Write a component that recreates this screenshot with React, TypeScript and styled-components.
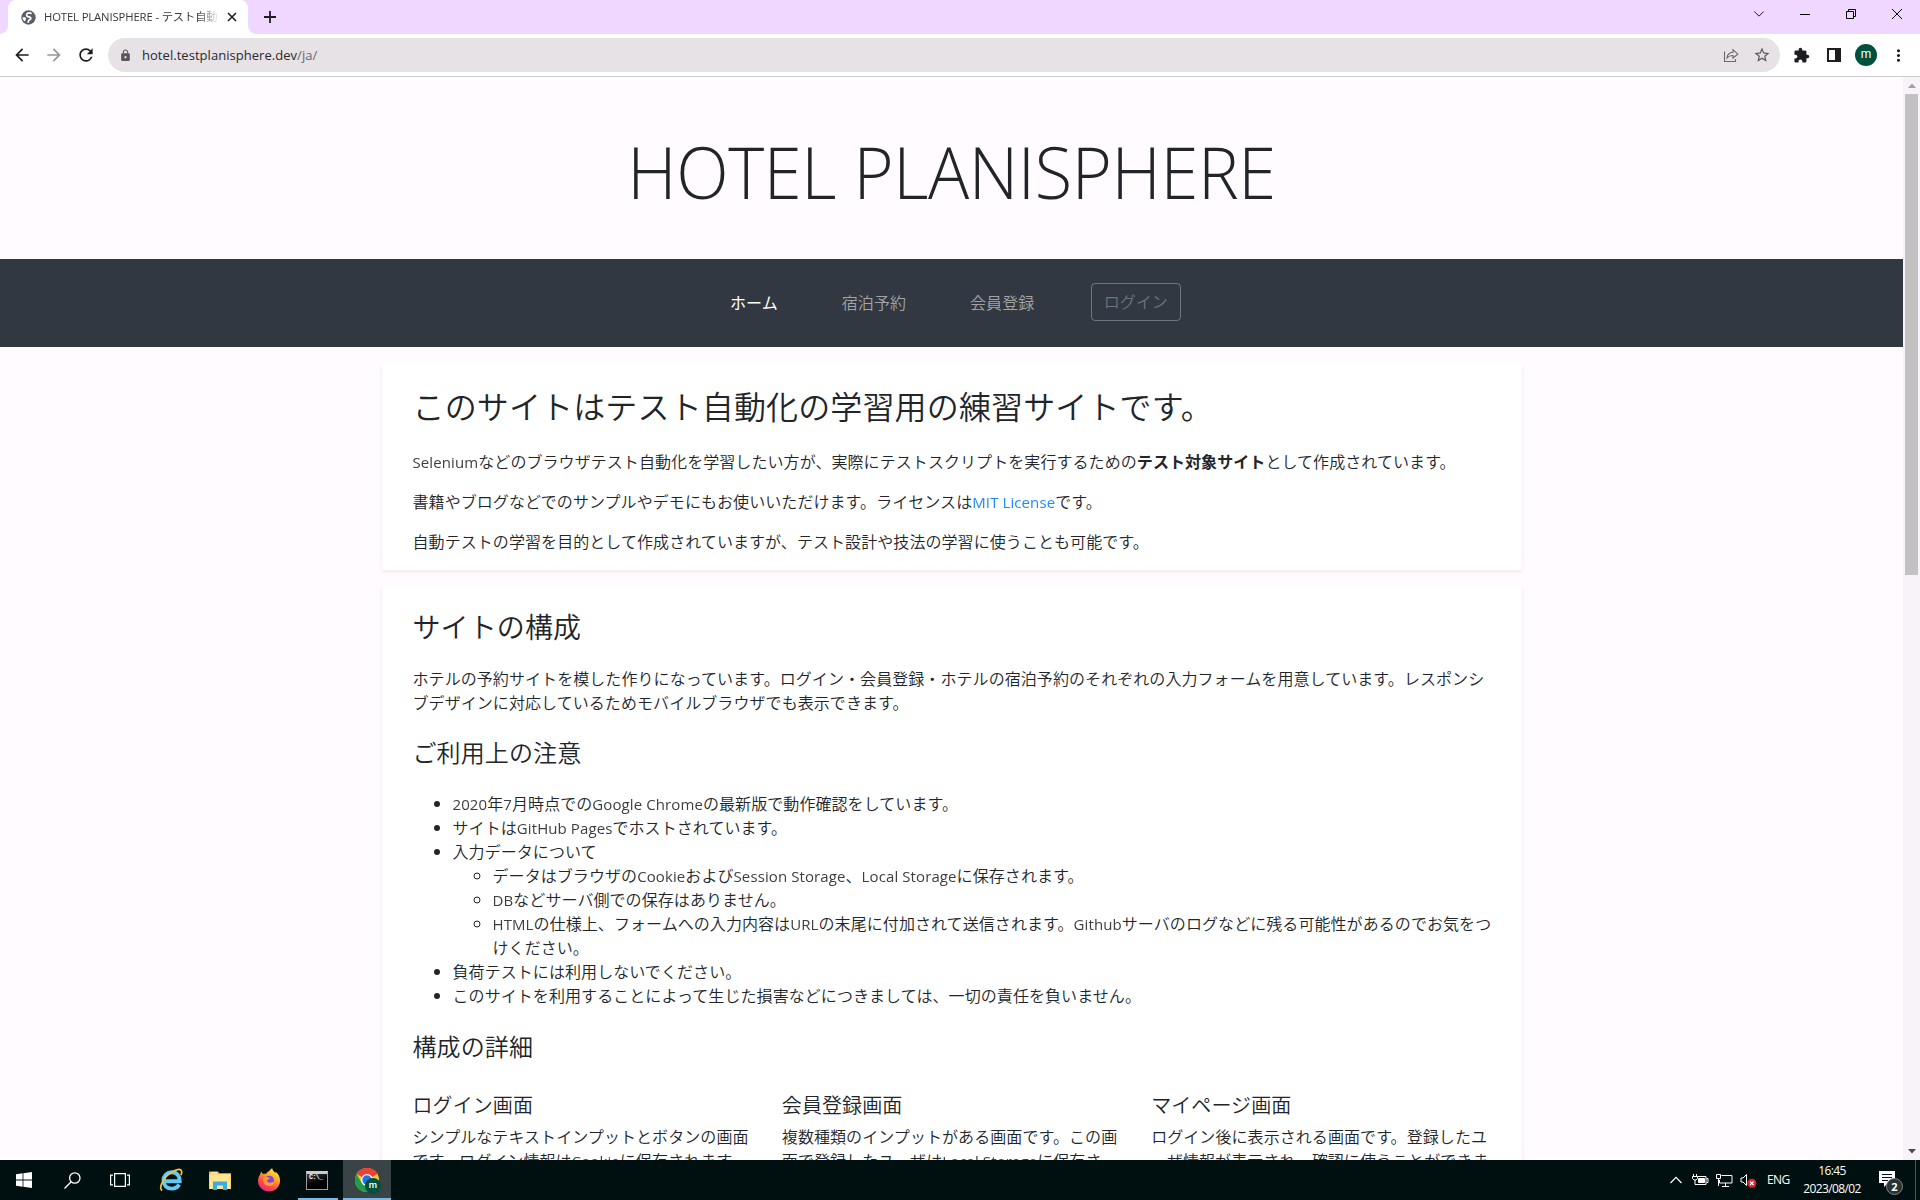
import React from "react";
import styled, { createGlobalStyle, css } from "styled-components";
import { MdArrowBack, MdArrowForward, MdRefresh, MdLock, MdStarBorder, MdExtension, MdMoreVert } from "react-icons/md";

const GlobalStyle = createGlobalStyle`
  *, *::before, *::after { box-sizing: border-box; }
  body { margin: 0; overflow: hidden; }
`;

const jpFont = `"Noto Sans CJK JP", sans-serif`;
const uiFont = `"Open Sans", "Noto Sans CJK JP", sans-serif`;

const Screen = styled.div`
  width: 1920px;
  height: 1200px;
  display: flex;
  flex-direction: column;
  overflow: hidden;
  font-family: ${uiFont};
  color: #212529;
`;

/* ---------- browser chrome ---------- */

const TabStrip = styled.div`
  height: 34px;
  flex: none;
  display: flex;
  background: #f0d7ff;
  padding-left: 8px;
`;

const Tab = styled.div`
  position: relative;
  width: 240px;
  height: 34px;
  border-radius: 8px 8px 0 0;
  background: #fff;
  display: flex;
  align-items: center;
  padding-left: 13px;
  &::before, &::after {
    content: "";
    position: absolute;
    bottom: 0;
    width: 8px;
    height: 8px;
  }
  &::before { left: -8px; background: radial-gradient(circle at 0 0, #f0d7ff 7.5px, #fff 8px); }
  &::after { right: -8px; background: radial-gradient(circle at 100% 0, #f0d7ff 7.5px, #fff 8px); }
`;

const TabTitle = styled.div`
  width: 174px;
  margin-left: 8px;
  overflow: hidden;
  white-space: nowrap;
  font-size: 11.3px;
  letter-spacing: -0.13px;
  line-height: 18px;
  color: #3a373c;
  mask-image: linear-gradient(90deg, #000 154px, transparent 176px);
`;

const TabClose = styled.div`
  display: flex;
  margin-left: 9px;
`;

const NewTab = styled.div`
  display: flex;
  align-items: center;
  margin-left: 16px;
`;

const WindowButtons = styled.div`
  display: flex;
  margin-left: auto;
  height: 28px;
`;

const WindowButton = styled.div`
  width: 46px;
  display: flex;
  align-items: center;
  justify-content: center;
`;

const Toolbar = styled.div`
  height: 43px;
  flex: none;
  display: flex;
  align-items: center;
  background: #fff;
  border-bottom: 1px solid #cfcdd0;
`;

const NavIcons = styled.div`
  display: flex;
  gap: 12px;
  padding-left: 12px;
  width: 108px;
  color: #1f1d20;
`;

const ToolIcon = styled.span<{ $color?: string }>`
  display: flex;
  color: ${(p) => p.$color ?? "#1f1d20"};
`;

const AddressBar = styled.div`
  width: 1672px;
  height: 34px;
  border-radius: 17px;
  background: #e7e2e6;
  display: flex;
  align-items: center;
  padding: 0 9px 0 11px;
  color: #5a575c;
`;

const Url = styled.div`
  flex: 1;
  margin-left: 10px;
  font-size: 13px;
  letter-spacing: 0.04px;
  color: #2b292c;
  span { color: #6b666b; }
`;

const AddressIcons = styled.div`
  display: flex;
  align-items: center;
  gap: 13px;
`;

const ToolbarRight = styled.div`
  flex: 1;
  display: flex;
  align-items: center;
  padding-left: 13px;
`;

const SidePanelIcon = styled.svg`
  width: 14px;
  height: 14px;
  margin-left: 17px;
`;

const Avatar = styled.div`
  width: 22px;
  height: 22px;
  margin: 0 12px 0 14px;
  border-radius: 50%;
  background: #00503f;
  color: #fff;
  font: 12px/20px Roboto, sans-serif;
  text-align: center;
`;

/* ---------- page ---------- */

const Viewport = styled.div`
  height: 1083px;
  flex: none;
  display: flex;
  overflow: hidden;
`;

const Page = styled.div`
  width: 1903px;
  height: 1083px;
  overflow: hidden;
  background: #fffbff;
  font: 400 16px/24px ${jpFont};
`;

const Hero = styled.header`
  height: 182.4px;
  padding: 52px 0 44px;
  text-align: center;
`;

const HeroTitle = styled.h1`
  margin: 0;
  font: 300 71px/86.4px "Open Sans", sans-serif;
  letter-spacing: -0.4px;
  transform: scaleX(0.966);
`;

const NavBar = styled.nav`
  height: 88px;
  background: #323841;
  display: flex;
  align-items: center;
  padding: 0 0 2px 730px;
  gap: 64px;
`;

const NavLink = styled.a<{ $active?: boolean }>`
  font-weight: ${(p) => (p.$active ? 400 : 350)};
  letter-spacing: 0.0044em;
  color: ${(p) => (p.$active ? "#fff" : "#a2a4a7")};
  white-space: nowrap;
`;

const LoginButton = styled.button`
  width: 90px;
  height: 38px;
  margin-left: -7px;
  padding: 0 1px 2px 0;
  border: 1px solid #6c757d;
  border-radius: 4px;
  background: transparent;
  color: #6c757d;
  font: 350 16px/24px ${jpFont};
`;

const Container = styled.main`
  width: 1140px;
  margin: 16px auto 0;
  display: flex;
  flex-direction: column;
  gap: 16px;
`;

const Card = styled.section`
  background: #fff;
  padding: 24px 31px 16px;
  box-shadow: 0 2px 4px rgba(0, 0, 0, 0.075);
  font-weight: 350;
  letter-spacing: 0.0044em;
`;

const IntroCard = styled(Card)`
  padding: 22.6px 31px 17px;
  h2 { margin-bottom: 25px; }
`;

const headings = {
  2: css`font-size: 32px; margin-bottom: 24px;`,
  3: css`font-size: 28px; margin-bottom: 22px;`,
  4: css`font-size: 24px; margin-bottom: 24px;`,
  5: css`font-size: 20px; margin-bottom: 6.5px;`,
};

const Heading = styled.h2<{ $level: 2 | 3 | 4 | 5 }>`
  margin: 0;
  line-height: 1.2;
  font-weight: 350;
  letter-spacing: 0.0044em;
  ${(p) => headings[p.$level]}
`;

const Paragraph = styled.p`
  margin: 0 0 16px;
  &:last-child { margin-bottom: 0; }
`;

const Lead = styled(Paragraph)`
  margin-bottom: 24px;
`;

const Latin = styled.span`
  font-family: "Open Sans", sans-serif;
  font-size: 15px;
  font-weight: 400;
  letter-spacing: 0.1px;
  line-height: 1;
  opacity: 0.88;
`;

const Link = styled.a`
  color: #007bff;
`;

const Strong = styled.strong`
  font-weight: 700;
`;

const List = styled.ul<{ $nested?: boolean }>`
  margin: 0 ${(p) => (p.$nested ? "-6px 0" : "0 25px")} 0;
  padding-left: 40px;
  list-style: ${(p) => (p.$nested ? "circle" : "disc")};
`;

const Columns = styled.div`
  display: grid;
  grid-template-columns: repeat(3, 1fr);
  gap: 30px;
  padding-top: 8.5px;
  height: 200px;
`;

const ScrollTrack = styled.div`
  width: 17px;
  background: #f8f3f8;
  display: flex;
  flex-direction: column;
  align-items: center;
`;

const ScrollArrow = styled.div<{ $down?: boolean }>`
  height: 17px;
  display: flex;
  align-items: center;
  margin-top: ${(p) => (p.$down ? "auto" : "0")};
`;

const ScrollThumb = styled.div`
  width: 13px;
  height: 481px;
  background: #c4c1c5;
`;

/* ---------- taskbar ---------- */

const Taskbar = styled.footer`
  height: 40px;
  flex: none;
  display: flex;
  background: #000f10;
  color: #fff;
`;

const TaskItem = styled.div<{ $w?: number; $active?: boolean; $running?: boolean }>`
  width: ${(p) => p.$w ?? 48}px;
  height: 40px;
  display: flex;
  align-items: center;
  justify-content: center;
  background: ${(p) => (p.$active ? "#3a4446" : "transparent")};
  box-shadow: ${(p) => (p.$active ? "inset 0 -2px #76b9ed" : "none")};
  ${(p) =>
    p.$running &&
    css`
      padding-right: 3px;
      background: linear-gradient(#76b9ed, #76b9ed) 4px 100% / 40px 2px no-repeat;
    `}
`;

const Tray = styled.div`
  margin-left: auto;
  display: flex;
  align-items: center;
  height: 40px;
`;

const Language = styled.div`
  width: 24px;
  margin-left: 10px;
  padding-bottom: 1px;
  font-size: 12px;
  letter-spacing: -0.6px;
`;

const Clock = styled.div`
  width: 60px;
  margin-left: 11px;
  padding-bottom: 1px;
  text-align: center;
  font-size: 12px;
  letter-spacing: -0.6px;
  line-height: 18px;
  white-space: nowrap;
`;

const Notice = styled.div`
  position: relative;
  display: flex;
  margin-left: 17px;
  width: 36px;
  height: 18px;
`;

const NoticeCount = styled.div`
  position: absolute;
  left: 7px;
  top: 7px;
  width: 17px;
  height: 17px;
  border-radius: 50%;
  border: 1px solid #7c8585;
  background: #2c3133;
  font: 700 11px/15px "Open Sans", sans-serif;
  text-align: center;
`;

const ShowDesktop = styled.div`
  width: 5px;
  height: 40px;
  border-left: 1px solid #4d5758;
`;

/** Sets runs of Latin letters and digits in the Latin face, the rest in the page face. */
const T = ({ children }: { children: string }) => (
  <>
    {children.split(/([A-Za-z0-9][A-Za-z0-9 ]*)/).map((part, i) =>
      i % 2 ? <Latin key={i}>{part}</Latin> : part
    )}
  </>
);

const screens = [
  { title: "ログイン画面", body: "シンプルなテキストインプットとボタンの画面です。ログイン情報はCookieに保存されます。" },
  { title: "会員登録画面", body: "複数種類のインプットがある画面です。この画面で登録したユーザはLocal Storageに保存され、ログインに使うことができます。" },
  { title: "マイページ画面", body: "ログイン後に表示される画面です。登録したユーザ情報が表示され、確認に使うことができます。" },
];

const GlobeIcon = () => (
  <svg width="15" height="15" viewBox="0 0 15 15">
    <circle cx="7.5" cy="7.5" r="7.2" fill="#5a5e66" />
    <path d="M10.500 3.800C9.300 2.500 6.500 2.700 5.800 4.200c-.7 1.600.6 2.500 2 2.700 1.600.2 2.400.9 1.900 2-.5 1-2.300.9-2.400 2.300l-.1 1.500" stroke="#fff" strokeWidth="1.700" fill="none" />
    <path d="M1.600 7c1.300.3 3 .1 3.400 1.200.2.900-.5 1.200-.6 2.200l-.2 1.200C2.300 10.600 1.500 8.900 1.600 7z" fill="#fff" />
  </svg>
);

const ShareIcon = () => (
  <svg width="17" height="15" viewBox="0 0 17 15" fill="none" stroke="#6c686d" strokeWidth="1.1">
    <path d="M1.500 3.500v10h11v-2.500M4 10C4.300 6.500 6.500 4.500 10 4.300V1.700l4.800 4.400L10 10V7.500C7.500 7.400 5.500 8 4 10z" />
  </svg>
);

const IeIcon = () => (
  <svg width="24" height="24" viewBox="0 0 24 24" fill="none">
    <path d="M20.200 16.500C18.800 19 16.100 20.600 12.700 20.600c-5 0-8.200-3.500-8.200-8.100C4.500 7.700 8 4.300 12.800 4.300c5 0 8.100 3.700 7.900 9H6" stroke="#63caf5" strokeWidth="3.900" />
    <path d="M3.200 22.500C-1 19.500 5 8.500 13 4 18.500.5 22.800.3 22.700 4.200c0 1-.3 2-.8 3" stroke="#f4c52c" strokeWidth="1.700" />
  </svg>
);

const FolderIcon = () => (
  <svg width="22" height="19" viewBox="0 0 22 19">
    <path d="M0 1.500C0 .7.400.5 1 .5h8l1.200 1.700H22V18H0z" fill="#f2c24e" />
    <path d="M.5 3.200h21V18H.5V5z" fill="#ffe592" />
    <path d="M2 1.200h6v1.200H2z" fill="#fff6d6" />
    <path d="M4 19v-8.500h14V19h-4v-4.500H8V19z" fill="#35aee6" />
  </svg>
);

const FirefoxIcon = () => (
  <svg width="24" height="24" viewBox="0 0 24 24">
    <defs>
      <linearGradient id="fx" x1=".8" y1="0" x2=".25" y2="1">
        <stop offset="0" stopColor="#fff14f" />
        <stop offset=".4" stopColor="#ffa029" />
        <stop offset=".7" stopColor="#ff4848" />
        <stop offset="1" stopColor="#e4208d" />
      </linearGradient>
    </defs>
    <path d="M4.500 3.500c.2 1.200.8 2 1.500 2.500 1-.3 2-.3 3 0C9.700 4.600 11 3.600 12.200 3.300 13 2 14 .8 15.200.3c.2 2 1.500 3.100 3.300 4.700l.3-1.200C21.500 6.500 23.500 9.500 23 13.500c-.6 6-5.200 10-11 10S1 19 1 13c0-2.500.8-4.500 2-6.200C3.300 5.500 3.700 4.300 4.500 3.500z" fill="url(#fx)" />
    <circle cx="12.300" cy="12.300" r="4.600" fill="#8143dd" />
    <path d="M6.500 10c2-1.700 4-.7 5.500-.6 1.500.2.8 1.800-.8 2.200-1.500.4-1.500 2 .2 2.800 2.300 1 4-.8 6-.2-1 3-3.500 4.300-6.200 3.800C7.500 17.300 5.500 14 6.500 10z" fill="#ff9a2e" />
  </svg>
);

const TerminalBox = styled.div`
  width: 22px;
  height: 19px;
  border: 1px solid #999da0;
  border-top: 3px solid #c9cdd0;
  background: linear-gradient(160deg, #3a3a3a, #000 55%);
  padding-left: 2px;
  color: #fff;
  font: 700 6.500px/8px "Liberation Mono", monospace;
  letter-spacing: -0.5px;
  white-space: nowrap;
`;

const ChromeWrap = styled.div`
  position: relative;
  width: 24px;
  height: 24px;
`;

const ChromeBadge = styled.div`
  position: absolute;
  left: 10px;
  top: 10px;
  width: 16px;
  height: 16px;
  border-radius: 50%;
  background: #00503f;
  font: 500 9.500px/14px Roboto, sans-serif;
  text-align: center;
`;

const ChromeIcon = () => (
  <svg width="24" height="24" viewBox="0 0 24 24">
    <circle cx="12" cy="12" r="12" fill="#fcc934" />
    <path d="M12 12L1.600 6A12 12 0 0 1 22.400 6z" fill="#ea4335" />
    <path d="M12 0A12 12 0 0 1 22.400 6H12z" fill="#ea4335" />
    <path d="M1.600 6A12 12 0 0 0 12 24l5.200-9L12 12 6.800 15z" fill="#1e9e4a" />
    <circle cx="12" cy="12" r="6" fill="#fff" />
    <circle cx="12" cy="12" r="4.700" fill="#2673e8" />
  </svg>
);

export default function App() {
  return (
    <Screen>
      <GlobalStyle />
      <TabStrip>
        <Tab>
          <GlobeIcon />
          <TabTitle>HOTEL PLANISPHERE - テスト自動</TabTitle>
          <TabClose>
            <svg width="10" height="10" viewBox="0 0 10 10" stroke="#1f1d20" strokeWidth="1.600">
              <path d="M1 1l8 8M9 1L1 9" />
            </svg>
          </TabClose>
        </Tab>
        <NewTab>
          <svg width="12" height="12" viewBox="0 0 12 12" stroke="#1f1d20" strokeWidth="1.800">
            <path d="M6 0v12M0 6h12" />
          </svg>
        </NewTab>
        <WindowButtons>
          <WindowButton>
            <svg width="10" height="6" viewBox="0 0 10 6" fill="none" stroke="#1f1d20">
              <path d="M.3.5L5 5.200 9.700.5" />
            </svg>
          </WindowButton>
          <WindowButton>
            <svg width="10" height="1" viewBox="0 0 10 1"><path d="M0 0h10v1H0z" /></svg>
          </WindowButton>
          <WindowButton>
            <svg width="10" height="10" viewBox="0 0 10 10" fill="none" stroke="#000">
              <path d="M.5 2.500h7v7h-7zM2.500 2.500v-2h7v7h-2" />
            </svg>
          </WindowButton>
          <WindowButton>
            <svg width="10" height="10" viewBox="0 0 10 10" stroke="#000"><path d="M0 0l10 10M10 0L0 10" /></svg>
          </WindowButton>
        </WindowButtons>
      </TabStrip>

      <Toolbar>
        <NavIcons>
          <ToolIcon><MdArrowBack size={20} /></ToolIcon>
          <ToolIcon $color="#99959b"><MdArrowForward size={20} /></ToolIcon>
          <ToolIcon><MdRefresh size={20} /></ToolIcon>
        </NavIcons>
        <AddressBar>
          <MdLock size={13} />
          <Url>hotel.testplanisphere.dev<span>/ja/</span></Url>
          <AddressIcons>
            <ShareIcon />
            <MdStarBorder size={18} />
          </AddressIcons>
        </AddressBar>
        <ToolbarRight>
          <ToolIcon><MdExtension size={17} /></ToolIcon>
          <SidePanelIcon viewBox="0 0 14 14">
            <path d="M0 0h14v14H0zM2 2v10h6V2z" fill="#1f1d20" fillRule="evenodd" />
          </SidePanelIcon>
          <Avatar>m</Avatar>
          <ToolIcon><MdMoreVert size={19} /></ToolIcon>
        </ToolbarRight>
      </Toolbar>

      <Viewport>
        <Page>
          <Hero><HeroTitle>HOTEL PLANISPHERE</HeroTitle></Hero>
          <NavBar>
            <NavLink $active>ホーム</NavLink>
            <NavLink>宿泊予約</NavLink>
            <NavLink>会員登録</NavLink>
            <LoginButton>ログイン</LoginButton>
          </NavBar>
          <Container>
            <IntroCard>
              <Heading $level={2}>このサイトはテスト自動化の学習用の練習サイトです。</Heading>
              <Paragraph>
                <T>Seleniumなどのブラウザテスト自動化を学習したい方が、実際にテストスクリプトを実行するための</T>
                <Strong>テスト対象サイト</Strong>として作成されています。
              </Paragraph>
              <Paragraph>
                書籍やブログなどでのサンプルやデモにもお使いいただけます。ライセンスは
                <Link><T>MIT License</T></Link>です。
              </Paragraph>
              <Paragraph>自動テストの学習を目的として作成されていますが、テスト設計や技法の学習に使うことも可能です。</Paragraph>
            </IntroCard>
            <Card>
              <Heading $level={3}>サイトの構成</Heading>
              <Lead>
                ホテルの予約サイトを模した作りになっています。ログイン・会員登録・ホテルの宿泊予約のそれぞれの入力フォームを用意しています。レスポンシブデザインに対応しているためモバイルブラウザでも表示できます。
              </Lead>
              <Heading as="h3" $level={4}>ご利用上の注意</Heading>
              <List>
                <li><T>2020年7月時点でのGoogle Chromeの最新版で動作確認をしています。</T></li>
                <li><T>サイトはGitHub Pagesでホストされています。</T></li>
                <li>
                  入力データについて
                  <List $nested>
                    <li><T>データはブラウザのCookieおよびSession Storage、Local Storageに保存されます。</T></li>
                    <li><T>DBなどサーバ側での保存はありません。</T></li>
                    <li><T>HTMLの仕様上、フォームへの入力内容はURLの末尾に付加されて送信されます。Githubサーバのログなどに残る可能性があるのでお気をつけください。</T></li>
                  </List>
                </li>
                <li>負荷テストには利用しないでください。</li>
                <li>このサイトを利用することによって生じた損害などにつきましては、一切の責任を負いません。</li>
              </List>
              <Heading as="h3" $level={4}>構成の詳細</Heading>
              <Columns>
                {screens.map((s) => (
                  <div key={s.title}>
                    <Heading as="h4" $level={5}>{s.title}</Heading>
                    <Paragraph><T>{s.body}</T></Paragraph>
                  </div>
                ))}
              </Columns>
            </Card>
          </Container>
        </Page>
        <ScrollTrack>
          <ScrollArrow>
            <svg width="8" height="5" viewBox="0 0 8 5"><path d="M0 5l4-4.500L8 5z" fill="#a3a0a4" /></svg>
          </ScrollArrow>
          <ScrollThumb />
          <ScrollArrow $down>
            <svg width="8" height="5" viewBox="0 0 8 5"><path d="M0 0l4 4.500L8 0z" fill="#4e4b4f" /></svg>
          </ScrollArrow>
        </ScrollTrack>
      </Viewport>

      <Taskbar>
        <TaskItem>
          <svg width="16" height="16" viewBox="0 0 16 16" fill="#fff">
            <path d="M0 2.300L6.600 1.300v6.300H0zM7.400 1.200L16 0v7.600H7.400zM0 8.400h6.600v6.300L0 13.700zM7.400 8.400H16V16l-8.600-1.200z" />
          </svg>
        </TaskItem>
        <TaskItem>
          <svg width="17" height="17" viewBox="0 0 17 17" fill="none" stroke="#fff" strokeWidth="1.300">
            <circle cx="10.800" cy="6" r="5.200" /><path d="M7.200 9.800L.5 16.500" />
          </svg>
        </TaskItem>
        <TaskItem>
          <svg width="20" height="14" viewBox="0 0 20 14" fill="none" stroke="#fff" strokeWidth="1.200">
            <path d="M4.600.6h10.800v12.800H4.600zM3 2.200H.6v9.600H3M17 2.200h2.400v9.600H17" />
          </svg>
        </TaskItem>
        <TaskItem $w={53}><IeIcon /></TaskItem>
        <TaskItem $w={46}><FolderIcon /></TaskItem>
        <TaskItem $w={51}><FirefoxIcon /></TaskItem>
        <TaskItem $w={49} $running><TerminalBox>C:\_</TerminalBox></TaskItem>
        <TaskItem $active>
          <ChromeWrap><ChromeIcon /><ChromeBadge>m</ChromeBadge></ChromeWrap>
        </TaskItem>
        <Tray>
          <svg width="87" height="16" viewBox="0 0 87 16" fill="none" stroke="#fff">
            <path d="M.5 11L6 5.300 11.500 11" strokeWidth="1.200" />
            <path d="M27.500 4.500h8.500v8h-11V10M36.500 6.500h1.500v4h-1.500M23.500 2v2.500M26.500 2v2.500M22.500 4.500h5v2l-1.500 1.500h-2l-1.500-1.500zM25 8v2" />
            <path d="M28.500 6.500h6v4h-6z" fill="#fff" />
            <path d="M51.500 3.500h10.500v7.500H49.500V8M46.500 2.500h4v4h-4zM48.500 6.500v7.500M55.500 11v3M52 14.500h7" />
            <path d="M71 6h2l3.500-3.500v11L73 10h-2z" />
            <circle cx="81.800" cy="11.300" r="4.500" fill="#e0202e" stroke="none" />
            <path d="M80 9.500l3.600 3.600M83.600 9.500L80 13.100" strokeWidth="1.200" />
          </svg>
          <Language>ENG</Language>
          <Clock>16:45<br />2023/08/02</Clock>
          <Notice>
            <svg width="16" height="16" viewBox="0 0 16 16">
              <path d="M0 0h16v12H9l-4 4v-4H0z" fill="#fff" />
              <path d="M3 3.500h10M3 6.500h10M3 9.500h6" stroke="#000f10" />
            </svg>
            <NoticeCount>2</NoticeCount>
          </Notice>
          <ShowDesktop />
        </Tray>
      </Taskbar>
    </Screen>
  );
}
